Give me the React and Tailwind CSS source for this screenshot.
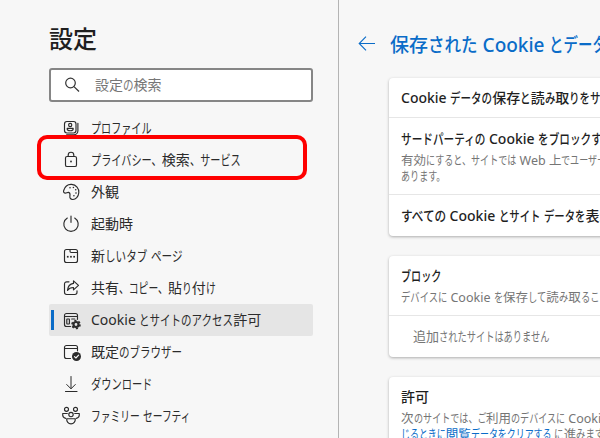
import React from 'react';

const KANA = /([\u3040-\u30ff、。]+)/;

// Kana is condensed, kanji and latin keep their normal width
const Text = ({ children, k = 0.73 }) => (
  <span className="whitespace-nowrap">
    {children.split(KANA).map((part, i) =>
      i % 2 === 1 ? (
        <span
          key={i}
          className="inline-block origin-left"
          style={{ transform: `scaleX(${k})`, marginRight: `${-(1 - k) * part.length}em` }}
        >
          {part}
        </span>
      ) : (
        part
      )
    )}
  </span>
);

const Icon = ({ children }) => (
  <svg
    className="w-5 h-5 shrink-0"
    viewBox="0 0 20 20"
    fill="none"
    stroke="currentColor"
    strokeWidth="1.15"
    strokeLinecap="round"
    strokeLinejoin="round"
  >
    {children}
  </svg>
);

const ProfileIcon = () => (
  <Icon>
    <rect x="3.5" y="3.5" width="11.5" height="11.5" rx="2.4" />
    <circle cx="9.2" cy="7" r="1.6" />
    <path d="M6.2 10.4h6v.6c0 1-1.2 1.7-3 1.7s-3-.7-3-1.7z" />
    <path d="M16.9 5.2v7.6a4 4 0 0 1-4 4H5.6" />
  </Icon>
);

const LockIcon = () => (
  <Icon>
    <rect x="4.5" y="6.5" width="11" height="10" rx="1.6" />
    <path d="M7.2 6.5V5a2.8 2.8 0 0 1 5.6 0v1.5" />
    <circle cx="10" cy="11.5" r=".9" fill="currentColor" stroke="none" />
  </Icon>
);

const PaletteIcon = () => (
  <Icon>
    <path d="M2.7 8.5C3.8 4.7 7 2.2 10.6 2.4c4.5.3 7.6 4 7.2 8.3-.4 4-3 7-6.2 6.8-2.2-.2-3-1.5-2.7-3.4.3-1.8.2-3.4-1.3-3.7-1.4-.3-2.1.9-3.5.7-1.4-.2-1.800-1.300-1.400-2.600z" />
    <g fill="currentColor" stroke="none">
      <circle cx="9" cy="5.8" r=".8" />
      <circle cx="12.4" cy="5.5" r=".8" />
      <circle cx="14.7" cy="7.8" r=".8" />
      <circle cx="15" cy="11" r=".8" />
      <circle cx="12.9" cy="13.7" r=".8" />
    </g>
  </Icon>
);

const PowerIcon = () => (
  <Icon>
    <path d="M6.3 4A7.2 7.2 0 1 0 13.7 4" />
    <path d="M10 2v6.3" />
  </Icon>
);

const NewTabIcon = () => (
  <Icon>
    <rect x="3.5" y="3.5" width="13" height="13" rx="2" />
    <path d="M9 3.7v1.6c0 .7.4 1.2 1.2 1.2h6" />
    <g fill="currentColor" stroke="none">
      <rect x="5.9" y="9.9" width="1.7" height="1.7" />
      <rect x="9.1" y="9.9" width="1.7" height="1.7" />
      <rect x="12.3" y="9.9" width="1.7" height="1.7" />
    </g>
  </Icon>
);

const ShareIcon = () => (
  <Icon>
    <path d="M8 3.8H5.7a2.2 2.2 0 0 0-2.2 2.2v8.3a2.2 2.2 0 0 0 2.2 2.2h8.1a2.2 2.2 0 0 0 2.2-2.2v-1.5" />
    <path d="M12.5 2.8l5 4.6-5 4.5V9.5c-2.8-.1-4.6.8-6 2.9.3-3.9 2.3-6.5 6-7z" />
  </Icon>
);

const CookieIcon = () => (
  <Icon>
    <path d="M9.5 16.5h-4a2 2 0 0 1-2-2v-9a2 2 0 0 1 2-2h9a2 2 0 0 1 2 2v3.8M3.5 6.5h13" />
    <rect x="5.8" y="9" width="2.6" height="5" rx=".4" />
    <path d="M10.7 9h3" />
    <circle cx="15" cy="14.5" r="2.5" strokeWidth="2.2" />
    <circle cx="15" cy="14.5" r="4" strokeWidth="1.6" strokeDasharray="2.1 2.088" strokeLinecap="butt" />
  </Icon>
);

const BrowserIcon = () => (
  <Icon>
    <path d="M9.5 16.5h-4a2 2 0 0 1-2-2v-9a2 2 0 0 1 2-2h9a2 2 0 0 1 2 2v3.3M3.5 6.5h13" />
    <circle cx="15.5" cy="14.5" r="4.5" fill="currentColor" stroke="none" />
    <path d="M13.5 14.6l1.4 1.4 2.7-2.9" className="stroke-[#f7f7f7]" />
  </Icon>
);

const DownloadIcon = () => (
  <Icon>
    <path d="M10 2.5v12M5.7 10.5L10 14.8l4.3-4.3" strokeWidth="1" />
    <path d="M4.5 17.5h11.5" />
  </Icon>
);

const FamilyIcon = () => (
  <Icon>
    <circle cx="5.5" cy="3.3" r="2" />
    <circle cx="14.5" cy="3.3" r="2" />
    <circle cx="10" cy="8.5" r="2.2" />
    <path d="M6.3 7.5H1.7c-.2 2.3.9 4.4 3 4.9M13.7 7.5h4.6c.2 2.3-.9 4.4-3 4.9" />
    <path d="M5.7 12.7h8.6c.2 3-1.6 5.1-4.3 5.1s-4.5-2.1-4.3-5.1z" />
  </Icon>
);

const menu = [
  { label: 'プロファイル', icon: ProfileIcon, k: 0.72 },
  { label: 'プライバシー、検索、サービス', icon: LockIcon, k: 0.725 },
  { label: '外観', icon: PaletteIcon },
  { label: '起動時', icon: PowerIcon },
  { label: '新しいタブ ページ', icon: NewTabIcon, k: 0.755 },
  { label: '共有、コピー、貼り付け', icon: ShareIcon, k: 0.7 },
  { label: 'Cookie とサイトのアクセス許可', icon: CookieIcon, k: 0.75 },
  { label: '既定のブラウザー', icon: BrowserIcon, k: 0.75 },
  { label: 'ダウンロード', icon: DownloadIcon, k: 0.73 },
  { label: 'ファミリー セーフティ', icon: FamilyIcon, k: 0.695 },
];

const Sidebar = () => (
  <aside className="w-[339px] shrink-0 border-r border-[#b4b4b4] pl-[49px] pr-[25px] pt-[23px]">
    <h1 className="h-8 text-[24px] leading-8 font-medium">設定</h1>
    <div className="mt-[13px] h-[34px] border-2 border-[#868686] rounded-[3px] bg-white flex items-center pl-[11px] text-[#767676]">
      <svg className="w-5 h-5 text-[#333]" viewBox="0 0 20 20" fill="none" stroke="currentColor" strokeWidth="1.2">
        <circle cx="8.5" cy="8" r="4.8" />
        <path d="M12 11.6l5 4.9" />
      </svg>
      <span className="ml-[13px] text-[14px] leading-5">
        <Text k={0.75}>設定の検索</Text>
      </span>
    </div>
    <nav className="mt-[10px] text-[#2b2b2b]">
      {menu.map(({ label, icon: MenuIcon, k }) => {
        const active = label.startsWith('Cookie');
        return (
          <div
            key={label}
            className={`relative h-8 flex items-center gap-[10px] pl-3 rounded-[2px] text-[14px] leading-5 ${active ? 'bg-[#e5e5e5]' : ''}`}
          >
            {active && <span className="absolute left-[2px] top-[6px] h-5 w-[3px] bg-[#0a6cc8]" />}
            <MenuIcon />
            <Text k={k}>{label}</Text>
            {label.startsWith('プライバシー') && (
              <span className="absolute -left-3 -top-[9px] w-[270px] h-[45px] border-4 border-[#fe0000] rounded-[10px]" />
            )}
          </div>
        );
      })}
    </nav>
  </aside>
);

const Card = ({ children }) => (
  <section className="w-[640px] bg-white rounded-[4px] divide-y divide-[#e6e6e6] shadow-[0_1px_3px_rgba(0,0,0,0.3)]">
    {children}
  </section>
);

const Title = ({ children, k }) => (
  <h3 className="text-[14px] leading-5 font-medium whitespace-nowrap">
    <Text k={k}>{children}</Text>
  </h3>
);

const App = () => {
  return (
    <div className="w-full h-screen overflow-hidden flex bg-[#f7f7f7] text-[#1f1f1f] font-['Noto_Sans','Noto_Sans_CJK_JP',sans-serif]">
      <Sidebar />
      <main className="flex-1 min-w-0 overflow-hidden pl-[19px] pt-[30px]">
        <div className="flex items-center h-[30px] gap-[14px] text-[#0a6cc8]">
          <svg className="w-[18px] h-[18px] shrink-0" viewBox="0 0 18 18" fill="none" stroke="currentColor" strokeWidth="1.1">
            <path d="M17 7.5H1.2M8 .7L1.2 7.5L8 14.3" />
          </svg>
          <h2 className="text-[19px] leading-[30px] font-medium whitespace-nowrap">
            <Text k={0.87}>保存された</Text> <Text k={0.76}>Cookie とデータ</Text>
          </h2>
        </div>

        <div className="mt-[18px] pl-[31px] flex flex-col gap-5">
          <Card>
            <div className="px-3 h-10 flex items-center">
              <Title k={0.75}>Cookie データの保存と読み取りをサイトに許可する</Title>
            </div>
            <div className="px-3 pt-[11px] h-[77px]">
              <Title k={0.76}>サードパーティの Cookie をブロックする</Title>
              <div className="mt-1 text-[12.5px] leading-4 text-[#757575]">
                <p><Text k={0.725}>有効にすると、サイトでは Web 上でユーザーを追跡する</Text></p>
                <p><Text k={0.725}>あります。</Text></p>
              </div>
            </div>
            <div className="px-3 h-[41px] flex items-center">
              <h3 className="text-[14px] leading-5 font-medium whitespace-nowrap">
                <Text k={0.83}>すべての</Text> <Text k={0.74}>Cookie とサイト データを表示する</Text>
              </h3>
            </div>
          </Card>

          <Card>
            <div className="px-3 pt-[10px] h-[60px]">
              <Title k={0.72}>ブロック</Title>
              <p className="mt-1 text-[12.5px] leading-4 text-[#757575]">
                <Text k={0.745}>デバイスに Cookie を保存して読み取ることができません</Text>
              </p>
            </div>
            <div className="pl-6 h-[41px] flex items-center text-[13px] text-[#757575]">
              <Text k={0.71}>追加されたサイトはありません</Text>
            </div>
          </Card>

          <Card>
            <div className="px-3 pt-[10px] h-[80px]">
              <Title k={0.75}>許可</Title>
              <div className="mt-1 text-[12.5px] leading-4 text-[#757575]">
                <p><Text k={0.725}>次のサイトでは、ご利用のデバイスに Cookie を保存できます</Text></p>
                <p className="whitespace-nowrap">
                  <a className="text-[#0a6cc8]">
                    <Text k={0.715}>じるときに閲覧データをクリアする</Text>
                  </a>{' '}
                  <Text k={0.75}>に進みます</Text>
                </p>
              </div>
            </div>
          </Card>
        </div>
      </main>
    </div>
  );
};

export default App;
